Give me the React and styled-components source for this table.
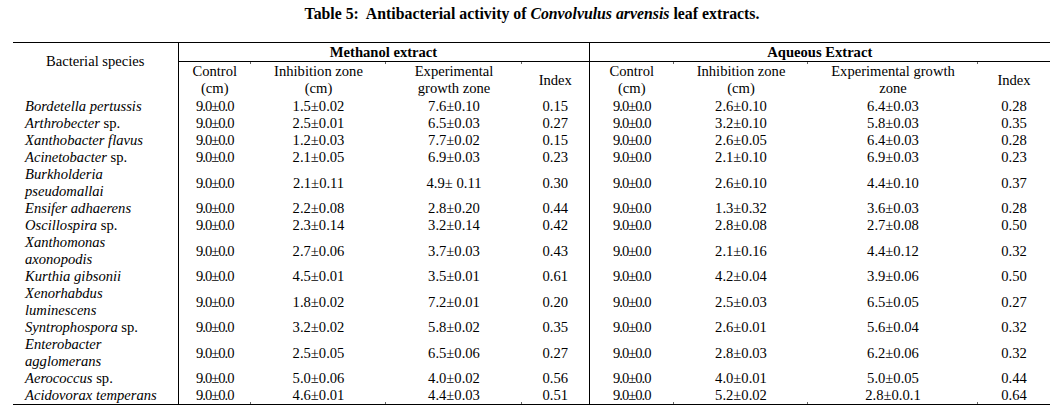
import React from "react";
import styled, { createGlobalStyle } from "styled-components";

const serif = `"Liberation Serif", "Times New Roman", Tinos, "DejaVu Serif", serif`;

const GlobalStyle = createGlobalStyle`
	body {
		margin: 0;
		background: #ffffff;
		color: #000000;
		font-family: ${serif};
	}
`;

const Page = styled.div`
	width: 1054px;
	padding-top: 5px;
	font-family: ${serif};
`;

const Title = styled.h1`
	margin: 0 0 20px 0;
	padding-left: 10px;
	text-align: center;
	font-family: ${serif};
	font-size: 15.8px;
	line-height: 17px;
	font-weight: bold;
	white-space: pre;
	em {
		font-style: italic;
	}
`;

const Table = styled.table`
	margin-left: 13px;
	width: 1037px;
	table-layout: fixed;
	border-collapse: collapse;
	border-top: 1px solid #000;
	border-bottom: 1px solid #000;
	font-family: ${serif};
	font-size: 14.6px;
	line-height: 17px;
`;

const Head = styled.th`
	position: relative;
	padding: 0;
	font-family: ${serif};
	font-weight: ${(props) => (props.$bold ? "bold" : "normal")};
	text-align: center;
	vertical-align: ${(props) => (props.$top ? "top" : "middle")};
	padding-top: ${(props) => props.$pt || 0}px;
	height: ${(props) => props.$h || 17}px;
	border-right: ${(props) => (props.$divider ? "1px solid #000" : "none")};
	border-bottom: ${(props) => (props.$underline ? "1px solid #000" : "none")};
	&::before {
		content: "";
		display: ${(props) => (props.$tick ? "block" : "none")};
		position: absolute;
		left: -1px;
		top: 0;
		width: 1px;
		height: 2px;
		background: #666;
	}
`;

const Cell = styled.td`
	position: relative;
	padding: 0;
	font-family: ${serif};
	text-align: center;
	vertical-align: middle;
	white-space: nowrap;
	letter-spacing: ${(props) => (props.$tight ? "-1px" : "0")};
	border-right: ${(props) => (props.$divider ? "1px solid #000" : "none")};
	&::after {
		content: "";
		display: ${(props) => (props.$tick ? "block" : "none")};
		position: absolute;
		left: -1px;
		bottom: 0;
		width: 1px;
		height: 2px;
		background: #666;
	}
`;

const Species = styled.td`
	padding: 0 0 0 12px;
	font-family: ${serif};
	text-align: left;
	vertical-align: middle;
	white-space: pre-line;
	border-right: 1px solid #000;
	em {
		font-style: italic;
	}
`;

const widths = [165, 73, 135, 136, 67, 85, 134, 170, 72];

const rows = [
	["Bordetella pertussis", false, "1.5±0.02", "7.6±0.10", "0.15", "2.6±0.10", "6.4±0.03", "0.28"],
	["Arthrobecter", true, "2.5±0.01", "6.5±0.03", "0.27", "3.2±0.10", "5.8±0.03", "0.35"],
	["Xanthobacter flavus", false, "1.2±0.03", "7.7±0.02", "0.15", "2.6±0.05", "6.4±0.03", "0.28"],
	["Acinetobacter", true, "2.1±0.05", "6.9±0.03", "0.23", "2.1±0.10", "6.9±0.03", "0.23"],
	["Burkholderia\npseudomallai", false, "2.1±0.11", "4.9± 0.11", "0.30", "2.6±0.10", "4.4±0.10", "0.37"],
	["Ensifer adhaerens", false, "2.2±0.08", "2.8±0.20", "0.44", "1.3±0.32", "3.6±0.03", "0.28"],
	["Oscillospira", true, "2.3±0.14", "3.2±0.14", "0.42", "2.8±0.08", "2.7±0.08", "0.50"],
	["Xanthomonas\naxonopodis", false, "2.7±0.06", "3.7±0.03", "0.43", "2.1±0.16", "4.4±0.12", "0.32"],
	["Kurthia gibsonii", false, "4.5±0.01", "3.5±0.01", "0.61", "4.2±0.04", "3.9±0.06", "0.50"],
	["Xenorhabdus\nluminescens", false, "1.8±0.02", "7.2±0.01", "0.20", "2.5±0.03", "6.5±0.05", "0.27"],
	["Syntrophospora", true, "3.2±0.02", "5.8±0.02", "0.35", "2.6±0.01", "5.6±0.04", "0.32"],
	["Enterobacter\nagglomerans", false, "2.5±0.05", "6.5±0.06", "0.27", "2.8±0.03", "6.2±0.06", "0.32"],
	["Aerococcus", true, "5.0±0.06", "4.0±0.02", "0.56", "4.0±0.01", "5.0±0.05", "0.44"],
	["Acidovorax temperans", false, "4.6±0.01", "4.4±0.03", "0.51", "5.2±0.02", "2.8±0.0.1", "0.64"],
];

const SubHeads = ({ items, divider }) =>
	items.map((label, i) => (
		<Head key={i} $h={36} $tick={i !== 0} $divider={divider && i === 3}>
			{label}
		</Head>
	));

const App = () => {
	const last = rows.length - 1;
	return (
		<Page>
			<GlobalStyle />
			<Title>
				{"Table 5:  Antibacterial activity of "}
				<em>Convolvulus arvensis</em>
				{" leaf extracts."}
			</Title>
			<Table>
				<colgroup>
					{widths.map((w, i) => (
						<col key={i} style={{ width: w }} />
					))}
				</colgroup>
				<thead>
					<tr>
						<Head rowSpan={2} $top $pt={10} $divider>
							Bacterial species
						</Head>
						<Head colSpan={4} $bold $h={18} $underline $divider>
							Methanol extract
						</Head>
						<Head colSpan={4} $bold $h={18} $underline>
							Aqueous Extract
						</Head>
					</tr>
					<tr>
						<SubHeads
							divider
							items={[
								<>Control<br />(cm)</>,
								<>Inhibition zone<br />(cm)</>,
								<>Experimental<br />growth zone</>,
								"Index",
							]}
						/>
						<SubHeads
							items={[
								<>Control<br />(cm)</>,
								<>Inhibition zone<br />(cm)</>,
								<>Experimental growth<br />zone</>,
								"Index",
							]}
						/>
					</tr>
				</thead>
				<tbody>
					{rows.map(([name, sp, mi, me, mx, ai, ae, ax], r) => (
						<tr key={r}>
							<Species>
								<em>{name}</em>
								{sp && " sp."}
							</Species>
							<Cell $tight>9.0±0.0</Cell>
							<Cell $tick={r === last}>{mi}</Cell>
							<Cell $tick={r === last}>{me}</Cell>
							<Cell $tick={r === last} $divider>
								{mx}
							</Cell>
							<Cell $tight>9.0±0.0</Cell>
							<Cell $tick={r === last}>{ai}</Cell>
							<Cell $tick={r === last}>{ae}</Cell>
							<Cell $tick={r === last}>{ax}</Cell>
						</tr>
					))}
				</tbody>
			</Table>
		</Page>
	);
};

export default App;
